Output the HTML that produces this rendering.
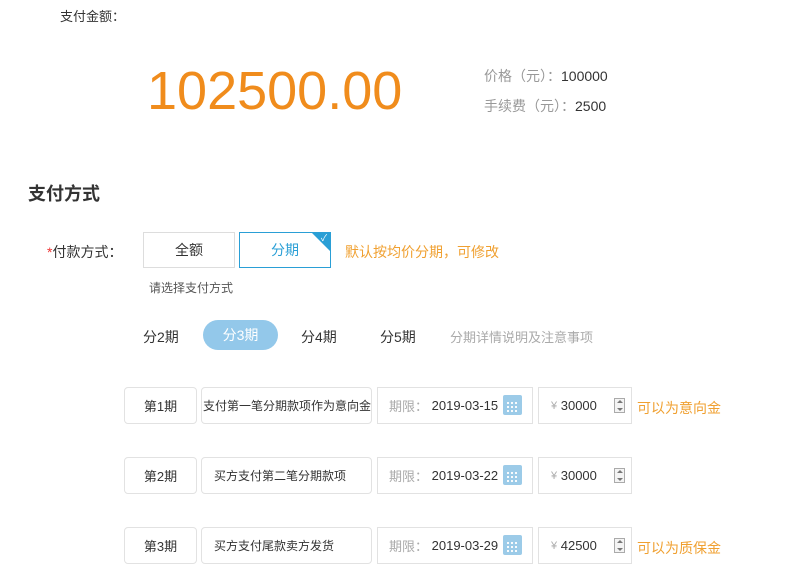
<!DOCTYPE html>
<html><head><meta charset="utf-8"><style>
*{margin:0;padding:0;box-sizing:border-box}
body{width:800px;height:584px;background:#fff;position:relative;overflow:hidden;font-family:"Liberation Sans","Noto Sans CJK SC",sans-serif;color:#333}
.a{position:absolute;white-space:nowrap}
.box{position:absolute;border:1px solid #e2e2e2;height:37px;display:flex;align-items:center;font-size:13px;color:#333;white-space:nowrap;overflow:hidden}
.d{font-size:12px}
.cal{position:absolute;width:19px;height:20px;background:#9ccbe8;border-radius:2px}
.cal:after{content:"";position:absolute;left:3px;top:6px;width:13px;height:11px;background:
radial-gradient(circle,#fff 1px,transparent 1.2px) 0 0/4px 4px}
.spin{position:absolute;width:11px;height:15px;border:1px solid #aaa;background:#f4f4f4}
.spin:before{content:"";position:absolute;left:2px;top:1px;border:3px solid transparent;border-bottom:3px solid #777;border-top:0}
.spin:after{content:"";position:absolute;left:2px;bottom:1px;border:3px solid transparent;border-top:3px solid #777;border-bottom:0}
</style></head><body>
<div class="a" style="left:60px;top:6px;font-size:13px">支付金额：</div>
<div class="a" style="left:147px;top:60px;font-size:54px;line-height:62px;color:#f08c1c">102500.00</div>
<div class="a" style="left:484px;top:66px;font-size:14px;color:#999">价格（元）：<span style="color:#333">100000</span></div>
<div class="a" style="left:484px;top:96px;font-size:14px;color:#999">手续费（元）：<span style="color:#333">2500</span></div>
<div class="a" style="left:28px;top:180px;font-size:18px;font-weight:bold;color:#333">支付方式</div>
<div class="a" style="left:47px;top:242px;font-size:14px"><span style="color:#e33">*</span>付款方式：</div>
<div class="a" style="left:143px;top:232px;width:92px;height:36px;border:1px solid #ddd;font-size:14px;text-align:center;line-height:34px">全额</div>
<div class="a" style="left:239px;top:232px;width:92px;height:36px;border:1px solid #2a9fd6;font-size:14px;text-align:center;line-height:34px;color:#2a9fd6;overflow:hidden">分期<div style="position:absolute;right:0;top:0;width:0;height:0;border-top:18px solid #2a9fd6;border-left:18px solid transparent"></div><div style="position:absolute;right:3px;top:-12px;color:#fff;font-size:9px">✓</div></div>
<div class="a" style="left:345px;top:242px;font-size:14px;color:#f0a030">默认按均价分期，可修改</div>
<div class="a" style="left:149px;top:279px;font-size:12px;color:#555">请选择支付方式</div>
<div class="a" style="left:143px;top:327px;font-size:14px">分2期</div>
<div class="a" style="left:203px;top:320px;width:75px;height:30px;border-radius:15px;background:#93c8ea;color:#fff;font-size:14px;text-align:center;line-height:30px">分3期</div>
<div class="a" style="left:301px;top:327px;font-size:14px">分4期</div>
<div class="a" style="left:380px;top:327px;font-size:14px">分5期</div>
<div class="a" style="left:450px;top:327px;font-size:13px;color:#aaa">分期详情说明及注意事项</div>

<div class="box" style="left:124px;top:387px;width:73px;border-radius:4px;justify-content:center">第1期</div>
<div class="box d" style="left:201px;top:387px;width:171px;border-radius:4px;padding-left:1px">支付第一笔分期款项作为意向金</div>
<div class="box" style="left:377px;top:387px;width:156px;padding-left:11px"><span style="color:#aaa">期限：</span>&nbsp;2019-03-15</div>
<div class="cal" style="left:503px;top:395px"></div>
<div class="box" style="left:538px;top:387px;width:94px;padding-left:12px"><span style="color:#aaa;font-size:11px">¥</span>&nbsp;30000</div>
<div class="spin" style="left:614px;top:398px"></div>
<div class="a" style="left:637px;top:398px;font-size:14px;color:#f0a030">可以为意向金</div>

<div class="box" style="left:124px;top:457px;width:73px;border-radius:4px;justify-content:center">第2期</div>
<div class="box d" style="left:201px;top:457px;width:171px;border-radius:4px;padding-left:12px">买方支付第二笔分期款项</div>
<div class="box" style="left:377px;top:457px;width:156px;padding-left:11px"><span style="color:#aaa">期限：</span>&nbsp;2019-03-22</div>
<div class="cal" style="left:503px;top:465px"></div>
<div class="box" style="left:538px;top:457px;width:94px;padding-left:12px"><span style="color:#aaa;font-size:11px">¥</span>&nbsp;30000</div>
<div class="spin" style="left:614px;top:468px"></div>

<div class="box" style="left:124px;top:527px;width:73px;border-radius:4px;justify-content:center">第3期</div>
<div class="box d" style="left:201px;top:527px;width:171px;border-radius:4px;padding-left:12px">买方支付尾款卖方发货</div>
<div class="box" style="left:377px;top:527px;width:156px;padding-left:11px"><span style="color:#aaa">期限：</span>&nbsp;2019-03-29</div>
<div class="cal" style="left:503px;top:535px"></div>
<div class="box" style="left:538px;top:527px;width:94px;padding-left:12px"><span style="color:#aaa;font-size:11px">¥</span>&nbsp;42500</div>
<div class="spin" style="left:614px;top:538px"></div>
<div class="a" style="left:637px;top:538px;font-size:14px;color:#f0a030">可以为质保金</div>
</body></html>
